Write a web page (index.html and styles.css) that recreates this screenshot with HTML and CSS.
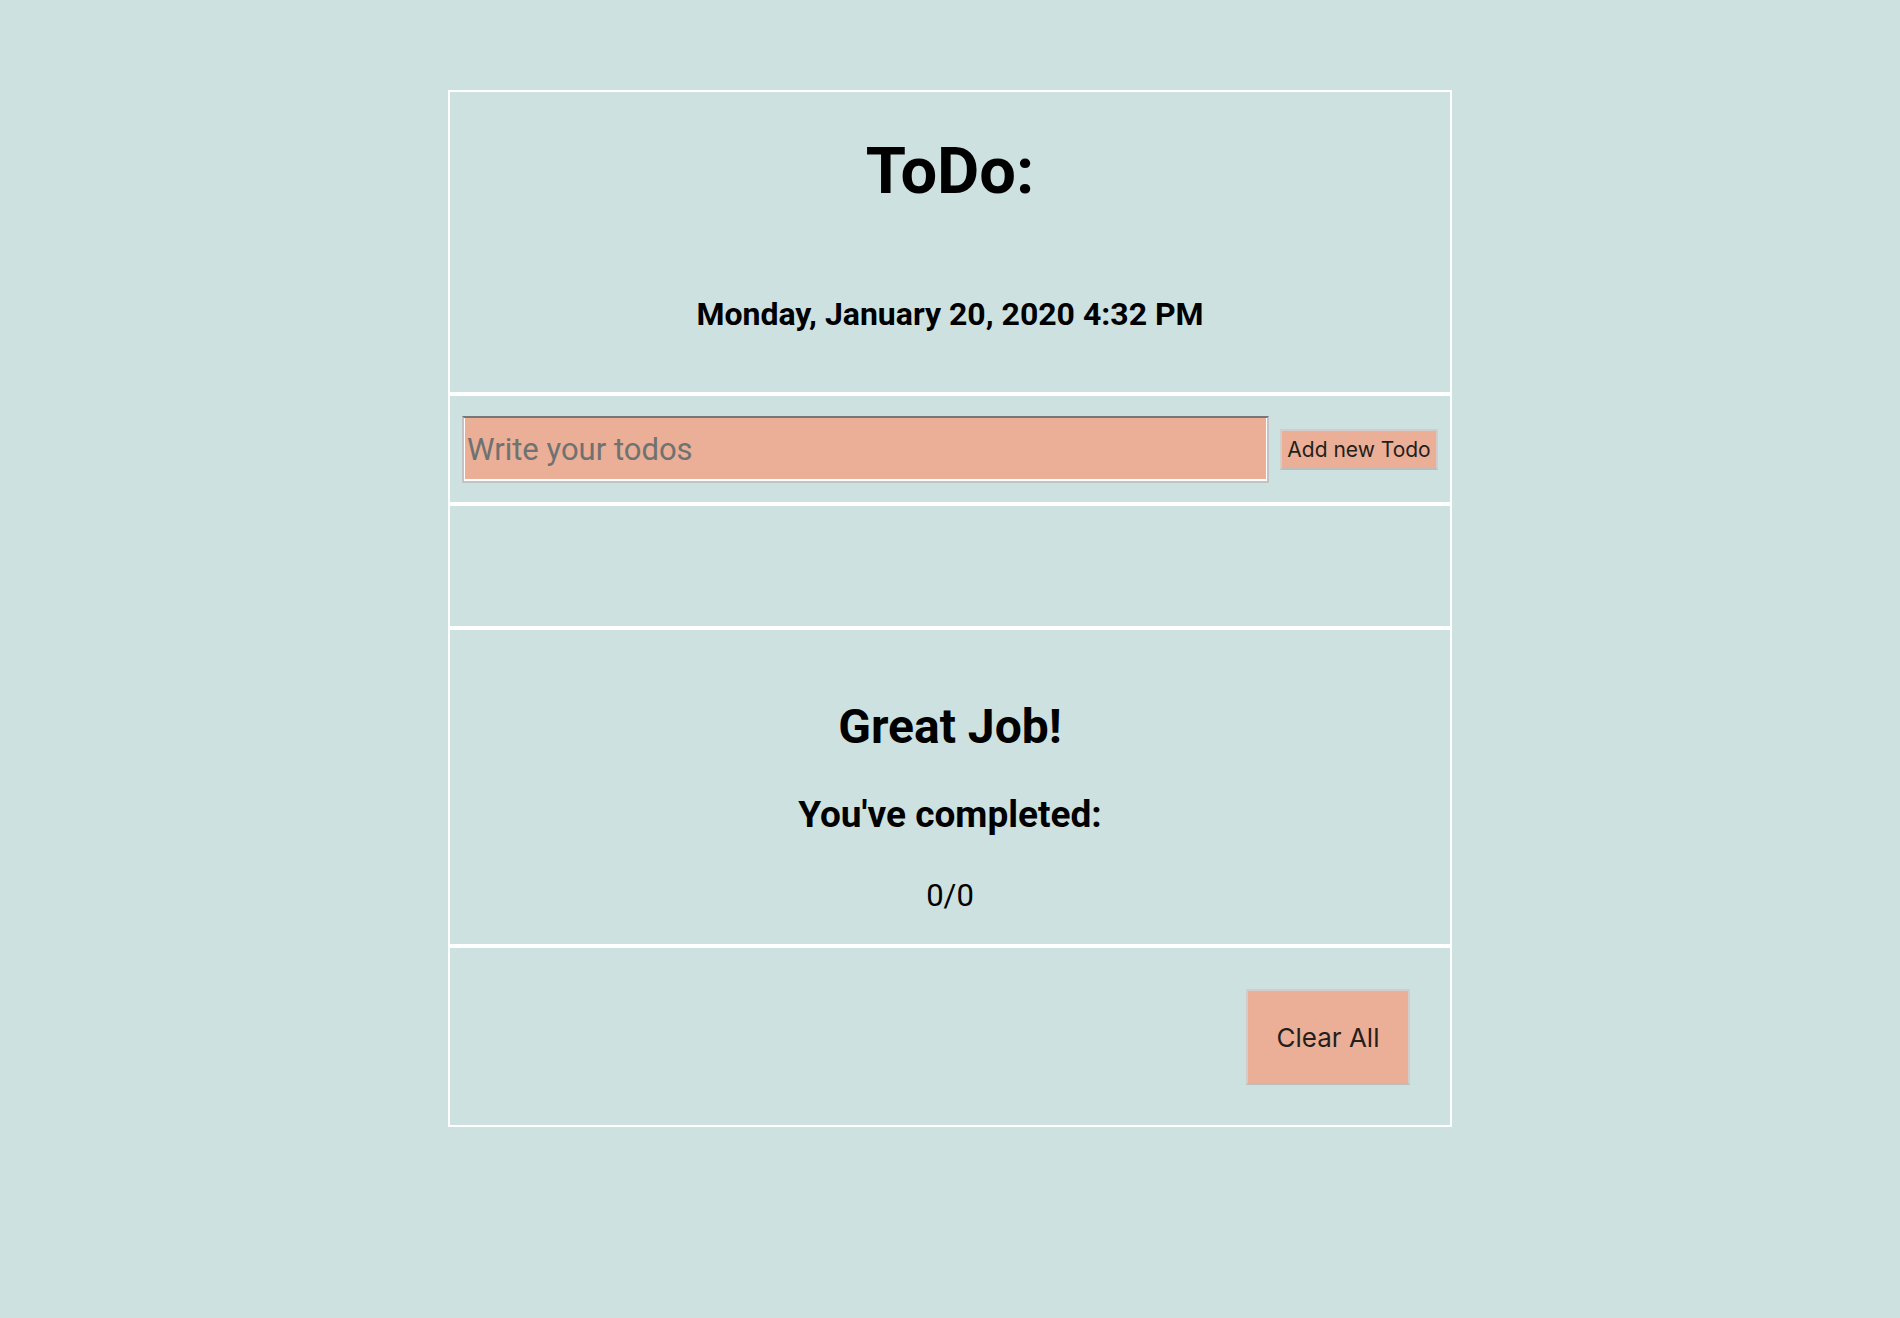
FILE: index.html
```html
<!DOCTYPE html>
<html lang="en">
<head>
<meta charset="utf-8">
<title>ToDo</title>
<link rel="stylesheet" href="styles.css">
</head>
<body>
<main class="app">
  <section class="panel header">
    <h1 class="title">ToDo:</h1>
    <h3 class="date">Monday, January 20, 2020 4:32 PM</h3>
  </section>
  <section class="panel entry">
    <input class="todo-input" type="text" placeholder="Write your todos">
    <button class="add-btn" type="button">Add new Todo</button>
  </section>
  <section class="panel list"></section>
  <section class="panel stats">
    <h2 class="great">Great Job!</h2>
    <h3 class="completed">You've completed:</h3>
    <p class="count">0/0</p>
  </section>
  <section class="panel footer">
    <button class="clear-btn" type="button">Clear All</button>
  </section>
</main>
</body>
</html>
```

FILE: styles.css
```css
* { box-sizing: border-box; }

body {
  margin: 0;
  background: #cde1e0;
  font-family: Roboto, "Liberation Sans", sans-serif;
  color: #000;
  min-height: 1318px;
}

.app {
  width: 1004px;
  margin: 90px auto 0;
  border: 2px solid #fff;
  display: flex;
  flex-direction: column;
}

.panel + .panel {
  border-top: 4px solid #fff;
}

.header {
  height: 300px;
  padding-top: 41px;
  text-align: center;
}

.title {
  margin: 0;
  font-size: 65px;
  font-weight: 700;
  line-height: normal;
}

.date {
  margin: 86px 0 0;
  font-size: 32px;
  font-weight: 700;
  line-height: normal;
}

.entry {
  height: 110px;
  padding: 20px 12px 19px;
  display: flex;
  align-items: center;
  gap: 11px;
}

.todo-input {
  flex: 1;
  height: 67px;
  margin: 0;
  padding: 0 0 0 3px;
  background: #ebae97;
  border-style: solid;
  border-width: 2px;
  border-color: #777 #c3c3c3 #c3c3c3 #c3c3c3;
  box-shadow: inset 1px 0 0 #fff, inset -1px 0 0 #fff, inset 0 -2px 0 #fff;
  font-family: Roboto, "Liberation Sans", sans-serif;
  font-size: 31px;
  color: #222;
  outline: none;
}

.todo-input::placeholder {
  color: #6e7270;
}

.add-btn {
  flex: none;
  width: 158px;
  height: 41px;
  margin: 0;
  padding: 0;
  background: #ebae97;
  border: 2px solid #d2cccb;
  border-bottom-color: #bdbdbd;
  font-family: Inter, "Noto Sans", sans-serif;
  font-size: 21px;
  color: #231f1e;
}

.list {
  height: 124px;
}

.stats {
  height: 318px;
  padding-top: 68px;
  text-align: center;
}

.great {
  margin: 0;
  font-size: 48px;
  font-weight: 700;
  line-height: normal;
}

.completed {
  margin: 38px 0 0;
  font-size: 37px;
  font-weight: 700;
  line-height: normal;
}

.count {
  margin: 41px 0 0;
  font-size: 31px;
  font-weight: 400;
  line-height: normal;
}

.footer {
  height: 181px;
  padding: 41px 40px 40px;
  display: flex;
  justify-content: flex-end;
  align-items: flex-start;
}

.clear-btn {
  width: 164px;
  height: 96px;
  margin: 0;
  padding: 0;
  background: #ebae97;
  border: 2px solid #d2cccb;
  border-bottom-color: #bdbdbd;
  font-family: Inter, "Noto Sans", sans-serif;
  font-size: 26px;
  color: #231f1e;
}
```
